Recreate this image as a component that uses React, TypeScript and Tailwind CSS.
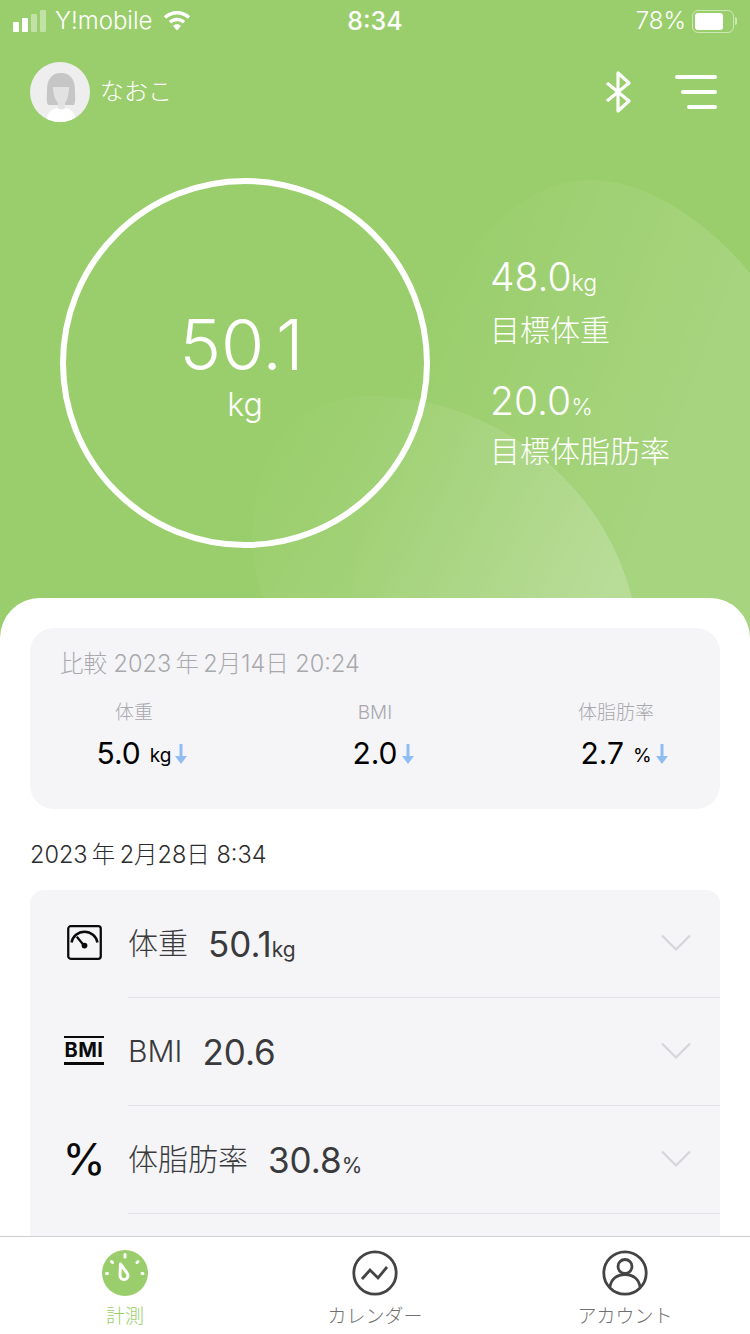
const sans = "font-['Inter','Noto_Sans_CJK_JP',sans-serif]";

const compare = [
  { label: "体重", value: "5.0", unit: "kg" },
  { label: "BMI", value: "2.0", unit: "" },
  { label: "体脂肪率", value: "2.7", unit: "%" },
];

function StatusBar() {
  return (
    <div className="h-[42px] flex items-center justify-between px-[13px] text-white text-[24px] leading-none">
      <div className="flex items-center w-[240px]">
        <div className="flex items-end gap-[3px] mr-[9px]">
          <div className="w-[6px] h-[10px] rounded-[1px] bg-white" />
          <div className="w-[6px] h-[14px] rounded-[1px] bg-white" />
          <div className="w-[6px] h-[18px] rounded-[1px] bg-white/40" />
          <div className="w-[6px] h-[22px] rounded-[1px] bg-white/40" />
        </div>
        <span className="font-light">Y!mobile</span>
        <svg className="ml-[10px]" width="30" height="22" viewBox="0 0 30 22" fill="white">
          <path d="M15 1C9.800 1 5.200 3 1.800 6.300L4.200 8.800C7 6.100 10.800 4.400 15 4.400s8 1.700 10.800 4.400l2.400-2.500C24.800 3 20.200 1 15 1z" />
          <path d="M15 7.700c-3.200 0-6.100 1.300-8.200 3.300l2.400 2.500c1.500-1.400 3.500-2.300 5.800-2.300s4.300.9 5.800 2.300l2.400-2.500c-2.100-2-5-3.300-8.200-3.300z" />
          <path d="M15 14.300c-1.600 0-3 .6-4 1.600l4 4.600 4-4.600c-1-1-2.400-1.600-4-1.600z" />
        </svg>
      </div>
      <span className="text-[25px] font-medium">8:34</span>
      <div className="flex items-center justify-end w-[240px]">
        <span className="font-light mr-[6px]">78%</span>
        <div className="w-[42px] h-[23px] rounded-[6px] border-[1.500px] border-white/50 p-[2px]">
          <div className="w-[78%] h-full bg-white rounded-[3px]" />
        </div>
        <div className="w-[2px] h-[8px] bg-white/50 rounded-r-sm ml-[1px]" />
      </div>
    </div>
  );
}

function Avatar() {
  return (
    <svg width="60" height="60" viewBox="0 0 60 60">
      <defs>
        <clipPath id="av">
          <circle cx="30" cy="30" r="30" />
        </clipPath>
      </defs>
      <g clipPath="url(#av)">
        <rect width="60" height="60" fill="#eeeeee" />
        <path d="M17 28c0-11 5-17 14-17s14 6 14 17c0 6 1 11-1 15H18c-2-4-1-9-1-15z" fill="#c6c6c6" />
        <path d="M23 25h16c0 8-2 14-4 16v6h-7v-6c-2-2-5-8-5-16z" fill="#e2e2e2" />
        <path d="M16 60c0-8 5-13 12-14 1 2 6 2 7 0 7 1 11 6 11 14z" fill="#fff" />
      </g>
    </svg>
  );
}

function DownArrow() {
  return (
    <svg width="12" height="22" viewBox="0 0 12 22" fill="#8fbdf2">
      <rect x="4.500" y="1" width="3" height="14" />
      <path d="M0 13h12l-6 8z" />
    </svg>
  );
}

function Chevron() {
  return (
    <svg className="ml-auto" width="30" height="18" viewBox="0 0 30 18" fill="none" stroke="#d5d6da" strokeWidth="2.200">
      <path d="M1 1.500l14 14 14-14" />
    </svg>
  );
}

function Row({ icon, label, value, unit }: { icon: React.ReactNode; label: string; value: string; unit?: string }) {
  return (
    <div className="flex h-[108px]">
      <div className="w-[98px] flex items-center justify-center pl-[10px] pb-[2px]">{icon}</div>
      <div className="flex-1 flex items-center pr-[29px] border-b border-[#e3e3e7]">
        <span className="text-[30px] font-light text-[#3a3a3c] leading-none">{label}</span>
        <span className="ml-[20px] text-[35px] text-[#3a3a3c] leading-none mt-[2px]">{value}</span>
        {unit && <span className="text-[21px] text-[#3a3a3c] leading-none mt-[12px]">{unit}</span>}
        <Chevron />
      </div>
    </div>
  );
}

function NavItem({ icon, label, active }: { icon: React.ReactNode; label: string; active?: boolean }) {
  return (
    <div className="flex flex-col items-center w-[250px] pt-[13px]">
      {icon}
      <span className={`mt-[11px] text-[19px] font-light leading-none ${active ? "text-[#9ACE6C]" : "text-[#707070]"}`}>{label}</span>
    </div>
  );
}

export default function App() {
  return (
    <div className={`${sans} relative w-[750px] h-[1334px] overflow-hidden bg-[#9ACE6C] flex flex-col`}>
      <svg className="absolute left-0 top-0" width="750" height="700" viewBox="0 0 750 700">
        <defs>
          <linearGradient id="blobA" gradientUnits="userSpaceOnUse" x1="430" y1="300" x2="700" y2="400">
            <stop offset="0" stopColor="#fff" stopOpacity="0" />
            <stop offset="1" stopColor="#fff" stopOpacity="0.13" />
          </linearGradient>
          <linearGradient id="blobB" gradientUnits="userSpaceOnUse" x1="300" y1="420" x2="600" y2="600">
            <stop offset="0" stopColor="#fff" stopOpacity="0.01" />
            <stop offset="1" stopColor="#fff" stopOpacity="0.2" />
          </linearGradient>
        </defs>
        <path d="M340 700C370 350 480 180 590 180c60 0 120 45 160 93v427z" fill="url(#blobA)" />
        <path d="M263 598C235 520 260 396 370 396c110 0 230 74 262 202v100H263z" fill="url(#blobB)" />
      </svg>

      <div className="relative">
        <StatusBar />
        <div className="flex items-center px-[30px] pt-[20px] h-[80px]">
          <Avatar />
          <span className="ml-[10px] text-[24px] font-light text-white leading-none">なおこ</span>
          <svg className="ml-auto" width="28" height="42" viewBox="0 0 28 42" fill="none" stroke="white" strokeWidth="3.200" strokeLinejoin="round">
            <path d="M2 30L24 12 13 2v38l11-10L2 12" />
          </svg>
          <div className="ml-[42px] flex flex-col items-end gap-[11px] mr-[3px]">
            <div className="w-[42px] h-[4px] rounded-full bg-white" />
            <div className="w-[36px] h-[4px] rounded-full bg-white" />
            <div className="w-[30px] h-[4px] rounded-full bg-white" />
          </div>
        </div>
      </div>

      <div className="relative flex items-center h-[476px] pl-[60px] pt-[6px]">
        <div className="w-[370px] h-[370px] rounded-full border-[6px] border-white flex flex-col items-center justify-center text-white">
          <span className="text-[70px] font-light leading-none mt-[5px] mr-[7px]">50.1</span>
          <span className="text-[32px] font-light leading-none mt-[9px]">kg</span>
        </div>
        <div className="ml-[60px] text-white pb-[3px]">
          <div className="leading-none">
            <span className="text-[39px] font-light">48.0</span>
            <span className="text-[23px] font-light">kg</span>
          </div>
          <div className="text-[30px] font-light leading-none mt-[19px]">目標体重</div>
          <div className="leading-none mt-[36px]">
            <span className="text-[39px] font-light">20.0</span>
            <span className="text-[23px] font-light">%</span>
          </div>
          <div className="text-[30px] font-light leading-none mt-[16px]">目標体脂肪率</div>
        </div>
      </div>

      <div className="relative flex-1 min-h-0 bg-white rounded-t-[40px] pt-[30px] px-[30px] overflow-hidden">
        <div className="h-[181px] rounded-[24px] bg-[#f5f5f8] pt-[24px]">
          <div className="pl-[30px] text-[23.500px] font-light text-[#a9a9ad] leading-none">比較 2023&thinsp;年&thinsp;2月14日 20:24</div>
          <div className="flex justify-between mt-[27px]">
            {compare.map((c) => (
              <div key={c.label} className="w-[208px] flex flex-col items-center">
                <span className="text-[19px] font-light text-[#a9a9ad] leading-none">{c.label}</span>
                <div className="relative flex items-center mt-[14px] h-[34px]">
                  <span className="text-[30px] text-black leading-none">{c.value}</span>
                  {c.unit && <span className="ml-[9px] mt-[5px] text-[19px] text-black leading-none">{c.unit}</span>}
                  <span className="absolute left-full ml-[4px] top-[7px]">
                    <DownArrow />
                  </span>
                </div>
              </div>
            ))}
          </div>
        </div>

        <div className="mt-[34px] text-[23.500px] font-light text-[#2c2c2e] leading-none">2023&thinsp;年&thinsp;2月28日 8:34</div>

        <div className="mt-[23px] rounded-t-[14px] bg-[#f5f5f8] h-[400px]">
          <Row
            label="体重"
            value="50.1"
            unit="kg"
            icon={
              <svg width="35" height="35" viewBox="0 0 34 34" fill="none" stroke="#0a0a0a">
                <rect x="1.200" y="1.200" width="31.600" height="31.600" rx="2.500" strokeWidth="2.200" />
                <path d="M4.400 17a12.800 12.800 0 0 1 25.200 0" strokeWidth="2.400" />
                <path d="M9.500 11.500l7 8.500" strokeWidth="2.200" />
                <circle cx="17" cy="20" r="2.800" fill="#0a0a0a" stroke="none" />
              </svg>
            }
          />
          <Row
            label="BMI"
            value="20.6"
            icon={
              <div className="border-t-[2px] border-b-[3px] border-[#0a0a0a] w-[40px] py-[3px] flex justify-center">
                <span className="text-[20px] font-bold tracking-[0.500px] text-[#0a0a0a] leading-[18px]">BMI</span>
              </div>
            }
          />
          <Row
            label="体脂肪率"
            value="30.8"
            unit="%"
            icon={<span className="text-[44px] text-[#0a0a0a] leading-none">%</span>}
          />
        </div>
      </div>

      <div className="absolute left-0 bottom-0 w-[750px] h-[98px] bg-white border-t border-[#cfcfcf] flex">
        <NavItem
          active
          label="計測"
          icon={
            <svg width="46" height="46" viewBox="0 0 46 46">
              <circle cx="23" cy="23" r="23" fill="#9ACE6C" />
              <g stroke="#fff" strokeWidth="3" strokeLinecap="round">
                <path d="M23 4.500v2.500M9.500 11.500l1 1M36 11.500l-1 1M4.500 23.500h1M41 23.500h-1" />
              </g>
              <path d="M18.500 14l6.500 9a4 4 0 1 1-7 2.500z" fill="none" stroke="#fff" strokeWidth="3" strokeLinejoin="round" />
            </svg>
          }
        />
        <NavItem
          label="カレンダー"
          icon={
            <svg width="46" height="46" viewBox="0 0 46 46" fill="none" stroke="#444" strokeWidth="2.800">
              <circle cx="23" cy="23" r="21.200" />
              <path d="M10 29l8-9 8 8 9-11" />
            </svg>
          }
        />
        <NavItem
          label="アカウント"
          icon={
            <svg width="46" height="46" viewBox="0 0 46 46" fill="none" stroke="#444" strokeWidth="2.800">
              <circle cx="23" cy="23" r="21.200" />
              <circle cx="23" cy="16.500" r="7" />
              <path d="M8 37c1-8 7-12.500 15-12.500s14 4.500 15 12.500" />
            </svg>
          }
        />
      </div>
    </div>
  );
}
